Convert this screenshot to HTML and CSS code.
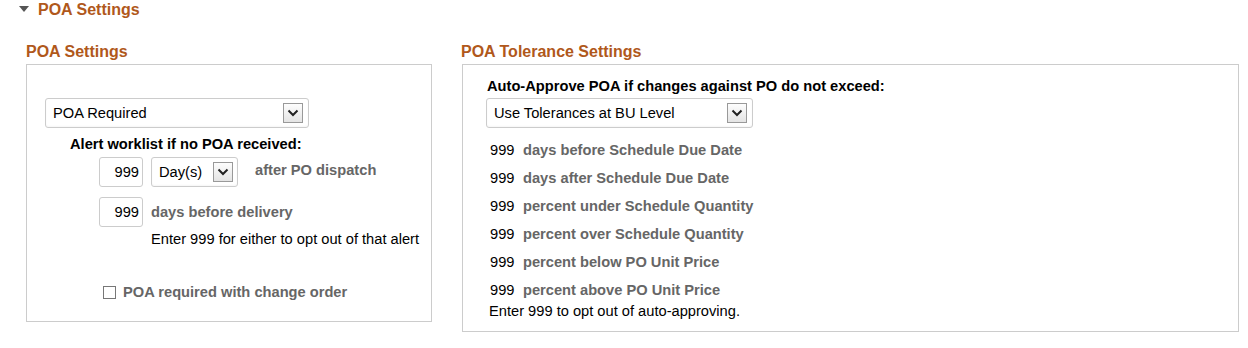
FILE: index.html
```html
<!DOCTYPE html>
<html>
<head>
  <meta charset="UTF-8">
  <title>POA Settings</title>
  <link rel="stylesheet" href="styles.css">
</head>
<body>

  <div class="collapsible">
    <span class="twisty"></span>
    <h1>POA Settings</h1>
  </div>

  <div class="columns">
    <section class="group group-left">
      <h2>POA Settings</h2>
      <div class="box">
        <div class="dropdown wide"><span>POA Required</span><i class="arrow"><svg width="12" height="8" viewBox="0 0 12 8"><path d="M1.5 1.5 L6 6 L10.5 1.5" fill="none" stroke="#222" stroke-width="2"/></svg></i></div>
        <div class="bold-label">Alert worklist if no POA received:</div>
        <div class="field-row">
          <div class="num">999</div>
          <div class="dropdown small"><span>Day(s)</span><i class="arrow"><svg width="12" height="8" viewBox="0 0 12 8"><path d="M1.5 1.5 L6 6 L10.5 1.5" fill="none" stroke="#222" stroke-width="2"/></svg></i></div>
          <span class="gray after">after PO dispatch</span>
        </div>
        <div class="field-row second">
          <div class="num">999</div>
          <span class="gray">days before delivery</span>
        </div>
        <div class="hint">Enter 999 for either to opt out of that alert</div>
        <label class="check"><span class="box-check"></span><span class="gray">POA required with change order</span></label>
      </div>
    </section>

    <section class="group group-right">
      <h2>POA Tolerance Settings</h2>
      <div class="box">
        <div class="bold-label top">Auto-Approve POA if changes against PO do not exceed:</div>
        <div class="dropdown wide2"><span>Use Tolerances at BU Level</span><i class="arrow"><svg width="12" height="8" viewBox="0 0 12 8"><path d="M1.5 1.5 L6 6 L10.5 1.5" fill="none" stroke="#222" stroke-width="2"/></svg></i></div>
        <ul class="tolerances">
          <li><span class="val">999</span><span class="gray">days before Schedule Due Date</span></li>
          <li><span class="val">999</span><span class="gray">days after Schedule Due Date</span></li>
          <li><span class="val">999</span><span class="gray">percent under Schedule Quantity</span></li>
          <li><span class="val">999</span><span class="gray">percent over Schedule Quantity</span></li>
          <li><span class="val">999</span><span class="gray">percent below PO Unit Price</span></li>
          <li><span class="val">999</span><span class="gray">percent above PO Unit Price</span></li>
        </ul>
        <div class="note">Enter 999 to opt out of auto-approving.</div>
      </div>
    </section>
  </div>

</body>
</html>
```

FILE: styles.css
```css
html { font-family: "Liberation Sans", Arial, sans-serif; font-size: 14.67px; color: #000; }
body { margin: 0; background: #fff; }
h1, h2 { margin: 0; font-size: 16px; line-height: 20px; font-weight: bold; color: #b0581b; }

.collapsible { display: flex; align-items: center; gap: 9px; padding-left: 19px; height: 20px; }
.twisty { width: 0; height: 0; border-left: 5px solid transparent; border-right: 5px solid transparent; border-top: 6px solid #555; margin-top: -2px; }

.columns { display: flex; align-items: flex-start; gap: 30px; padding-left: 26px; margin-top: 22px; }
.group h2 { margin-bottom: 2px; }
.group-right h2 { margin-left: -1px; }
.box { border: 1px solid #ccc; box-sizing: border-box; }
.group-left .box { width: 406px; height: 258px; padding: 33px 0 0 18px; }
.group-right .box { width: 777px; height: 268px; padding: 12px 0 0 23px; }

.dropdown { display: flex; align-items: center; justify-content: space-between; height: 30px; box-sizing: border-box; border: 1px solid #ccc; border-radius: 3px; padding: 0 5px 0 7px; background: #fff; box-shadow: inset 0 -1px 2px rgba(0,0,0,0.04); }
.dropdown.wide { width: 264px; }
.dropdown.wide2 { width: 267px; }
.dropdown.small { width: 87px; padding-right: 4px; }
.arrow { display: flex; align-items: center; justify-content: center; width: 20px; height: 20px; box-sizing: border-box; border: 1px solid #999; background: linear-gradient(#fdfdfd, #e4e4e4); }

.bold-label { font-weight: bold; line-height: 18px; margin: 7px 0 4px 25px; }
.bold-label.top { margin: 0 0 3px 1px; }

.field-row { display: flex; align-items: center; gap: 8px; margin-left: 54px; }
.field-row.second { margin-top: 10px; }
.num { width: 44px; height: 30px; box-sizing: border-box; border: 1px solid #ccc; border-radius: 3px; display: flex; align-items: center; justify-content: flex-end; padding-right: 3px; }
.gray { color: #666; font-weight: bold; }
.after { margin-left: 9px; margin-bottom: 4px; }

.hint { margin: 3px 0 0 106px; line-height: 18px; }

.check { display: flex; align-items: center; gap: 7px; margin: 35px 0 0 58px; line-height: 18px; }
.box-check { width: 13px; height: 13px; box-sizing: border-box; border: 1px solid #777; background: #fff; }

.tolerances { list-style: none; margin: 8px 0 0; padding: 0; }
.tolerances li { display: flex; align-items: center; height: 28px; padding-left: 4px; }
.val { width: 33px; }
.note { line-height: 18px; margin: -2px 0 0 3px; }
```
